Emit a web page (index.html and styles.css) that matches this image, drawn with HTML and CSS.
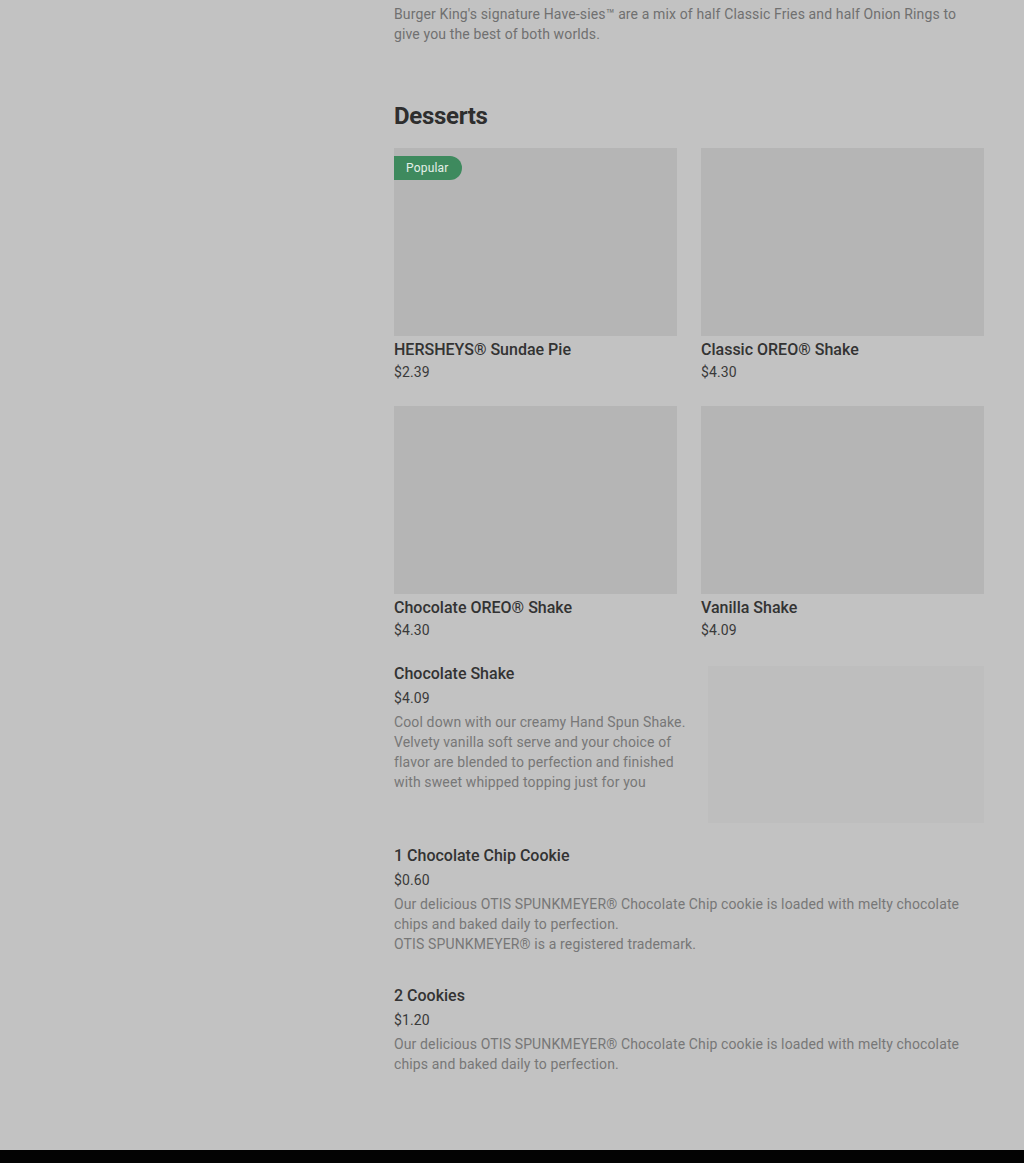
FILE: index.html
```html
<!DOCTYPE html>
<html lang="en">
<head>
    <meta charset="UTF-8">
    <meta name="viewport" content="width=device-width, initial-scale=1.0">
    <title>Burger King - Desserts</title>
    <link rel="stylesheet" href="styles.css">
</head>
<body>
    <div class="page">
        <div class="menu">
            <p class="intro">Burger King's signature Have-sies™ are a mix of half Classic Fries and half Onion Rings to give you the best of both worlds.</p>

            <h2 class="section-title">Desserts</h2>

            <div class="grid">
                <div class="card">
                    <div class="photo"><span class="badge">Popular</span></div>
                    <div class="name">HERSHEYS® Sundae Pie</div>
                    <div class="price">$2.39</div>
                </div>
                <div class="card">
                    <div class="photo"></div>
                    <div class="name">Classic OREO® Shake</div>
                    <div class="price">$4.30</div>
                </div>
                <div class="card">
                    <div class="photo"></div>
                    <div class="name">Chocolate OREO® Shake</div>
                    <div class="price">$4.30</div>
                </div>
                <div class="card">
                    <div class="photo"></div>
                    <div class="name">Vanilla Shake</div>
                    <div class="price">$4.09</div>
                </div>
            </div>

            <div class="item with-photo">
                <div class="item-text">
                    <div class="name">Chocolate Shake</div>
                    <div class="price">$4.09</div>
                    <p class="desc">Cool down with our creamy Hand Spun Shake. Velvety vanilla soft serve and your choice of flavor are blended to perfection and finished with sweet whipped topping just for you</p>
                </div>
                <div class="item-photo"></div>
            </div>

            <div class="item plain">
                <div class="item-text">
                    <div class="name">1 Chocolate Chip Cookie</div>
                    <div class="price">$0.60</div>
                    <p class="desc">Our delicious OTIS SPUNKMEYER® Chocolate Chip cookie is loaded with melty chocolate chips and baked daily to perfection.<br>OTIS SPUNKMEYER® is a registered trademark.</p>
                </div>
            </div>

            <div class="item plain">
                <div class="item-text">
                    <div class="name">2 Cookies</div>
                    <div class="price">$1.20</div>
                    <p class="desc">Our delicious OTIS SPUNKMEYER® Chocolate Chip cookie is loaded with melty chocolate chips and baked daily to perfection.</p>
                </div>
            </div>
        </div>
    </div>
    <footer class="footer"></footer>
</body>
</html>
```

FILE: styles.css
```css
body {
    margin: 0;
    background: #c2c2c2;
    font-family: Roboto, "Liberation Sans", sans-serif;
    color: #323232;
}
.page {
    display: flex;
    padding-left: 394px;
    padding-right: 40px;
    height: 1150px;
    box-sizing: border-box;
}
.menu {
    width: 590px;
}
.intro {
    margin: 4px 0 0;
    font-size: 14px;
    line-height: 20px;
    letter-spacing: 0.13px;
    color: #707070;
}
.section-title {
    margin: 56px 0 0;
    font-size: 24px;
    line-height: 32px;
    font-weight: 700;
    color: #2e2e2e;
    letter-spacing: -0.3px;
}
.grid {
    display: grid;
    grid-template-columns: 283px 283px;
    column-gap: 24px;
    row-gap: 24px;
    margin-top: 16px;
}
.photo {
    position: relative;
    height: 188px;
    background: #b5b5b5;
}
.badge {
    position: absolute;
    top: 8px;
    left: 0;
    height: 24px;
    line-height: 24px;
    padding: 0 13px 0 12px;
    font-size: 12px;
    letter-spacing: 0.2px;
    color: #e4efe8;
    background: #3e8a5e;
    border-radius: 0 12px 12px 0;
}
.name {
    margin-top: 2px;
    font-size: 16px;
    line-height: 24px;
    font-weight: 500;
    color: #333333;
}
.price {
    margin-top: 0;
    font-size: 14px;
    line-height: 20px;
    letter-spacing: 0.1px;
    color: #3a3a3a;
}
.item {
    display: flex;
    justify-content: space-between;
    margin-top: 21px;
}
.with-photo {
    margin-top: 22px;
}
.plain + .plain {
    margin-top: 30px;
}
.item .name {
    margin-top: 0;
}
.item .price {
    margin-top: 2px;
}
.with-photo .item-text {
    width: 300px;
}
.item-photo {
    width: 276px;
    height: 157px;
    margin-top: 4px;
    background: #bebebe;
}
.desc {
    margin: 4px 0 0;
    font-size: 14px;
    line-height: 20px;
    letter-spacing: 0.13px;
    color: #777777;
}
.footer {
    height: 13px;
    background: #030303;
}
```
